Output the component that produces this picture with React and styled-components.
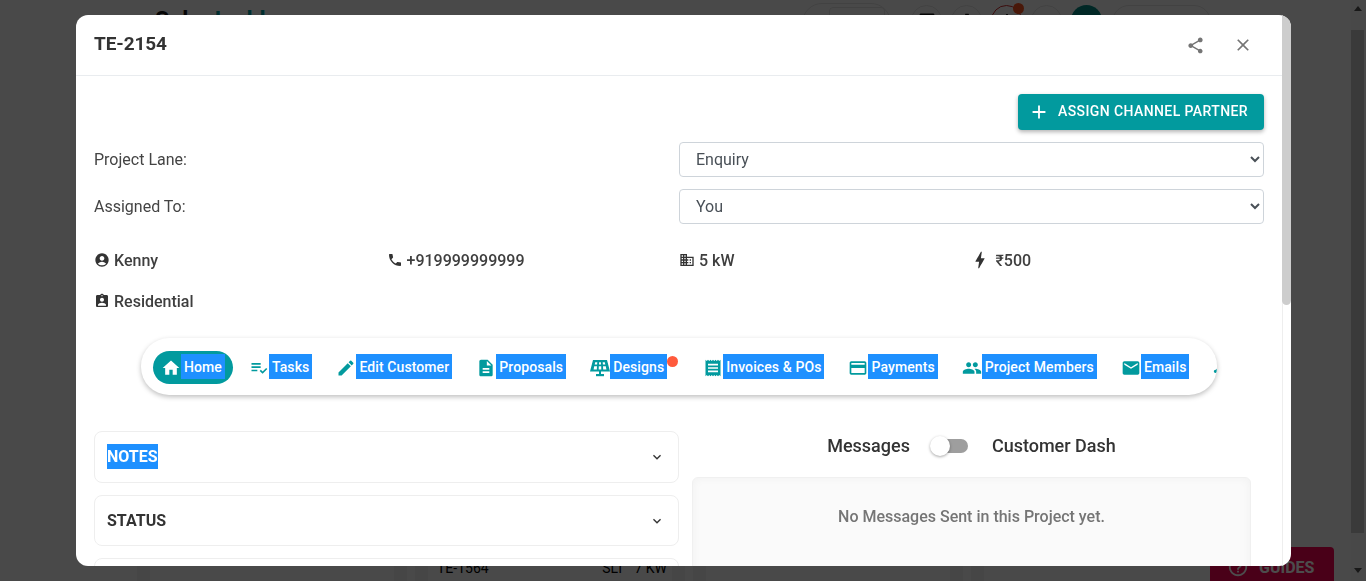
import styled, { createGlobalStyle } from "styled-components";
import {
  MdHome, MdPlaylistAddCheck, MdEdit, MdDescription, MdReceipt, MdPayment, MdPeople, MdEmail, MdTimeline,
  MdShare, MdClose, MdAdd, MdAccountCircle, MdPhone, MdBusiness, MdBolt, MdAssignmentInd,
  MdExpandMore, MdHelpOutline, MdNotifications, MdSettings, MdChat, MdPerson,
} from "react-icons/md";

const TEAL = "#029a9e";

const GlobalStyle = createGlobalStyle`
  html, body { margin: 0; height: 100%; overflow: hidden; }
  body { font-family: Roboto, "Noto Sans", sans-serif; color: #333; background: #f5f5f5; }
  * { box-sizing: border-box; }
`;

const SolarIcon = () => (
  <svg width="20" height="20" viewBox="0 0 20 20" fill={TEAL}>
    <path d="M3 2h14l3 11.5H0L3 2zM5.2 4.2l-.5 2.2h2.4l.2-2.2H5.2zm3.9 0l-.1 2.2h2l-.1-2.2H9.1zm3.6 0l.2 2.2h2.4l-.5-2.2h-2.1zM4.2 8.2l-.6 3.3h3.2l.2-3.3H4.2zm4.6 0l-.1 3.3h2.6l-.1-3.3H8.8zm4.2 0l.2 3.3h3.2l-.6-3.3H13z" fillRule="evenodd" />
    <rect x="9" y="13" width="2" height="3" />
    <rect x="6" y="16" width="8" height="2.2" />
  </svg>
);

const BoltIcon = styled(MdBolt)`
  margin: 0 -3px;
`;

const TABS = [
  { key: "home", label: "Home", icon: <MdHome size={20} />, active: true },
  { key: "tasks", label: "Tasks", icon: <MdPlaylistAddCheck size={20} /> },
  { key: "edit", label: "Edit Customer", icon: <MdEdit size={20} /> },
  { key: "proposals", label: "Proposals", icon: <MdDescription size={20} /> },
  { key: "designs", label: "Designs", icon: <SolarIcon />, badge: true },
  { key: "invoices", label: "Invoices & POs", icon: <MdReceipt size={20} /> },
  { key: "payments", label: "Payments", icon: <MdPayment size={20} /> },
  { key: "members", label: "Project Members", icon: <MdPeople size={20} /> },
  { key: "emails", label: "Emails", icon: <MdEmail size={20} /> },
  { key: "timeline", icon: <MdTimeline size={20} /> },
];

const INFO = [
  { icon: <MdAccountCircle size={16} />, text: "Kenny" },
  { icon: <MdPhone size={16} />, text: "+919999999999" },
  { icon: <MdBusiness size={16} />, text: "5 kW" },
  { icon: <BoltIcon size={22} />, text: "₹500", wide: true },
  { icon: <MdAssignmentInd size={16} />, text: "Residential" },
];

export default function App() {
  return (
    <>
      <GlobalStyle />
      <Page>
        <PageMain>
          <TopBar>
            <Logo>Solar <span>Ladder</span></Logo>
            <Actions>
              <SearchPill><SearchDot /><SearchInput /></SearchPill>
              <RoundButton><MdChat size={18} /></RoundButton>
              <RoundButton><MdSettings size={18} /></RoundButton>
              <RoundButton $alert><MdNotifications size={18} /></RoundButton>
              <RoundButton><MdPerson size={18} /></RoundButton>
              <Avatar />
              <PlanPill />
            </Actions>
          </TopBar>
          <Board>
            <BoardColumn><BoardCard /></BoardColumn>
            <BoardColumn>
              <BoardCard>
                <span>TE-1564</span>
                <CardMeta><span>SLT</span><span>7 KW</span></CardMeta>
              </BoardCard>
            </BoardColumn>
            <BoardColumn><BoardCard /></BoardColumn>
            <BoardColumn><BoardCard /></BoardColumn>
          </Board>
          <GuidesButton><MdHelpOutline size={22} />GUIDES</GuidesButton>
        </PageMain>
        <PageScrollbar>
          <ArrowUp />
          <PageThumb />
          <ArrowDown />
        </PageScrollbar>
      </Page>

      <Backdrop>
        <Modal>
          <ModalContent>
            <ModalHeader>
              <ModalTitle>TE-2154</ModalTitle>
              <HeaderIcons>
                <MdShare size={19} />
                <MdClose size={20} />
              </HeaderIcons>
            </ModalHeader>
            <ModalBody>
              <ButtonRow>
                <AssignButton><MdAdd size={22} />ASSIGN CHANNEL PARTNER</AssignButton>
              </ButtonRow>
              <FormGrid>
                <FieldLabel>Project Lane:</FieldLabel>
                <Select defaultValue="Enquiry">
                  <option>Enquiry</option>
                  <option>Survey</option>
                </Select>
                <FieldLabel>Assigned To:</FieldLabel>
                <Select defaultValue="You">
                  <option>You</option>
                </Select>
              </FormGrid>
              <InfoGrid>
                {INFO.map(({ icon, text, wide }) => (
                  <InfoItem key={text} $wide={wide}>{icon}{text}</InfoItem>
                ))}
              </InfoGrid>
              <TabBar>
                {TABS.map(({ key, label, icon, active, badge }) => (
                  <Tab key={key} $active={active} $badge={badge}>
                    {icon}
                    {label && <Selected>{label}</Selected>}
                    {badge && <Badge />}
                  </Tab>
                ))}
              </TabBar>
              <Columns>
                <AccordionList>
                  <AccordionCard $tall>
                    <AccordionTitle $selected>NOTES</AccordionTitle>
                    <MdExpandMore size={16} />
                  </AccordionCard>
                  <AccordionCard>
                    <AccordionTitle>STATUS</AccordionTitle>
                    <MdExpandMore size={16} />
                  </AccordionCard>
                  <AccordionCard />
                </AccordionList>
                <MessagesColumn>
                  <ToggleRow>
                    <ToggleLabel>Messages</ToggleLabel>
                    <Toggle><ToggleThumb /></Toggle>
                    <ToggleLabel>Customer Dash</ToggleLabel>
                  </ToggleRow>
                  <MessagesPanel>No Messages Sent in this Project yet.</MessagesPanel>
                </MessagesColumn>
              </Columns>
            </ModalBody>
          </ModalContent>
          <ModalRail><RailThumb /></ModalRail>
        </Modal>
      </Backdrop>
    </>
  );
}

const Page = styled.div`
  display: flex;
  height: 581px;
  overflow: hidden;
  background: #f6f6f6;
`;

const PageMain = styled.div`
  position: relative;
  flex: 1;
  min-width: 0;
  display: flex;
  flex-direction: column;
  justify-content: space-between;
`;

const TopBar = styled.header`
  display: flex;
  align-items: flex-start;
  padding: 3px 140px 0 155px;
`;

const Logo = styled.div`
  margin-top: 4px;
  font-size: 23px;
  font-weight: 700;
  color: #111;
  span { color: ${TEAL}; }
`;

const Actions = styled.div`
  margin-left: auto;
  display: flex;
  align-items: flex-start;
  gap: 9px;
`;

const SearchPill = styled.div`
  display: flex;
  align-items: center;
  gap: 12px;
  width: 89px;
  height: 40px;
  margin-right: 11px;
  padding-left: 6px;
  border: 1px solid #ddd;
  border-radius: 20px;
`;

const SearchDot = styled.span`
  width: 8px;
  height: 8px;
  margin-top: -8px;
  border-radius: 50%;
  background: ${TEAL};
`;

const SearchInput = styled.div`
  width: 56px;
  height: 30px;
  margin-top: -2px;
  border: 1px solid #ddd;
  border-radius: 4px;
`;

const RoundButton = styled.div`
  position: relative;
  display: flex;
  justify-content: center;
  width: 31px;
  height: 31px;
  margin-top: 2px;
  padding-top: 6px;
  border: 1px solid ${({ $alert }) => ($alert ? "#c62828" : "#ddd")};
  border-radius: 50%;
  color: #111;
  ${({ $alert }) => $alert && `
    &::after {
      content: "";
      position: absolute;
      top: -3px;
      right: -3px;
      width: 11px;
      height: 11px;
      border-radius: 50%;
      background: #f4511e;
    }
  `}
`;

const Avatar = styled.div`
  width: 31px;
  height: 31px;
  margin-top: 2px;
  border-radius: 50%;
  background: #04877f;
`;

const PlanPill = styled.div`
  width: 99px;
  height: 34px;
  margin: 2px 0 0 1px;
  border: 1px solid #ddd;
  border-radius: 17px;
`;

const Board = styled.div`
  display: flex;
  gap: 8px;
  height: 21px;
  padding-left: 137px;
`;

const BoardColumn = styled.div`
  width: 270px;
  padding: 0 13px;
  background: #ebebeb;
`;

const BoardCard = styled.div`
  display: flex;
  justify-content: space-between;
  height: 100%;
  padding: 0 5px 0 9px;
  background: #f4f4f4;
  font-size: 14px;
  line-height: 17px;
  color: #000;
`;

const CardMeta = styled.div`
  display: flex;
  gap: 10px;
`;

const GuidesButton = styled.div`
  position: absolute;
  right: 17px;
  bottom: -6px;
  display: flex;
  align-items: center;
  gap: 10px;
  width: 124px;
  height: 40px;
  padding-left: 17px;
  border-radius: 4px 4px 0 0;
  background: #f60050;
  color: #fff;
  font-size: 16px;
  font-weight: 700;
`;

const PageScrollbar = styled.div`
  display: flex;
  flex-direction: column;
  align-items: flex-start;
  width: 15px;
  background: #f1f1f1;
`;

const ArrowUp = styled.div`
  width: 0;
  height: 0;
  margin: 6px 0 0 3px;
  border: 4px solid transparent;
  border-top: 0;
  border-bottom: 5px solid #505050;
`;

const PageThumb = styled.div`
  width: 13px;
  height: 503px;
  margin-top: 19px;
  background: #c1c1c1;
`;

const ArrowDown = styled.div`
  width: 0;
  height: 0;
  margin: 35px 0 0 3px;
  border: 4px solid transparent;
  border-bottom: 0;
  border-top: 5px solid #505050;
`;

const Backdrop = styled.div`
  position: fixed;
  inset: 0;
  display: flex;
  padding: 15px 75px 15px 76px;
  background: rgba(0, 0, 0, 0.7);
`;

const Modal = styled.div`
  flex: 1;
  min-height: 0;
  display: flex;
  overflow: hidden;
  border-radius: 12px;
  background: #fff;
`;

const ModalContent = styled.div`
  flex: 1;
  min-width: 0;
  overflow: hidden;
`;

const ModalRail = styled.div`
  flex-shrink: 0;
  width: 9px;
  border-left: 1px solid #eee;
`;

const RailThumb = styled.div`
  width: 9px;
  height: 290px;
  margin-left: -1px;
  border-radius: 0 0 8px 8px;
  background: #cdcdcd;
`;

const ModalHeader = styled.div`
  display: flex;
  align-items: center;
  justify-content: space-between;
  height: 61px;
  padding: 0 18px;
  border-bottom: 1px solid #e9ecef;
`;

const ModalTitle = styled.h5`
  margin: 0 0 4px;
  font-size: 19px;
  font-weight: 700;
  letter-spacing: -0.1px;
  color: #333;
`;

const HeaderIcons = styled.div`
  display: flex;
  align-items: center;
  gap: 28px;
  margin-right: 11px;
  color: #757575;
`;

const ModalBody = styled.div`
  padding: 18px;
`;

const ButtonRow = styled.div`
  display: flex;
  justify-content: flex-end;
`;

const AssignButton = styled.button`
  display: flex;
  align-items: center;
  gap: 8px;
  height: 36px;
  padding: 0 16px 2px 10px;
  border: 0;
  border-radius: 4px;
  background: ${TEAL};
  color: #fff;
  font-family: inherit;
  font-size: 14px;
  font-weight: 500;
  letter-spacing: 0.4px;
  box-shadow: 0 2px 4px rgba(0, 0, 0, 0.3);
  svg { margin-top: 2px; }
`;

const FormGrid = styled.div`
  display: grid;
  grid-template-columns: 1fr 1fr;
  gap: 12px 0;
  align-items: center;
  margin-top: 12px;
`;

const FieldLabel = styled.label`
  font-size: 16px;
  color: #444;
`;

const Select = styled.select`
  width: 100%;
  height: 35px;
  padding: 0 12px;
  border: 1px solid #ced4da;
  border-radius: 4px;
  background: #fff;
  color: #495057;
  font-family: inherit;
  font-size: 16px;
`;

const InfoGrid = styled.div`
  display: grid;
  grid-template-columns: repeat(4, 1fr);
  gap: 17px 0;
  margin-top: 24px;
`;

const InfoItem = styled.div`
  display: flex;
  align-items: center;
  gap: ${({ $wide }) => ($wide ? "8px" : "4px")};
  height: 24px;
  font-size: 16px;
  font-weight: 500;
  color: #3f3f3f;
  svg { flex-shrink: 0; color: #333; }
`;

const TabBar = styled.nav`
  display: flex;
  align-items: center;
  gap: 8px;
  width: 1076px;
  height: 57px;
  margin: 25px 0 0 47px;
  padding: 0 12px;
  overflow: hidden;
  border-radius: 28px;
  box-shadow: 0 2px 5px rgba(0, 0, 0, 0.25);
`;

const Tab = styled.div`
  position: relative;
  flex-shrink: 0;
  display: flex;
  align-items: center;
  height: 33px;
  margin-top: 1px;
  padding: 0 ${({ $badge }) => ($badge ? "20px" : "8px")} 0 8px;
  border-radius: 17px;
  background: ${({ $active }) => ($active ? TEAL : "transparent")};
  color: ${({ $active }) => ($active ? "#fff" : TEAL)};
  svg { flex-shrink: 0; margin-top: 2px; }
`;

const Selected = styled.span`
  margin-top: -1px;
  padding: 1px 3px 0;
  background: #1e90ff;
  color: #fff;
  font-size: 14px;
  font-weight: 500;
  letter-spacing: 0.1px;
  line-height: 24px;
  white-space: nowrap;
`;

const Badge = styled.span`
  position: absolute;
  top: 5px;
  right: 9px;
  width: 11px;
  height: 11px;
  border-radius: 50%;
  background: #ff5a3c;
`;

const Columns = styled.div`
  display: grid;
  grid-template-columns: 585px 1fr;
  gap: 13px;
  margin-top: 36px;
`;

const AccordionList = styled.div`
  display: flex;
  flex-direction: column;
  gap: 12px;
`;

const AccordionCard = styled.div`
  display: flex;
  flex-shrink: 0;
  align-items: center;
  justify-content: space-between;
  height: ${({ $tall }) => ($tall ? "52px" : "51px")};
  padding: 0 13px 0 12px;
  border: 1px solid #eee;
  border-radius: 8px;
  color: #333;
`;

const AccordionTitle = styled.span`
  font-size: 16px;
  font-weight: 700;
  line-height: 25px;
  ${({ $selected }) => $selected && "margin-top: -1px; background: #1e90ff; color: #fff;"}
`;

const MessagesColumn = styled.div`
  display: flex;
  flex-direction: column;
  padding-right: 13px;
`;

const ToggleRow = styled.div`
  display: flex;
  align-items: center;
  justify-content: center;
  gap: 22px;
  height: 29px;
`;

const ToggleLabel = styled.span`
  font-size: 18px;
  font-weight: 500;
  color: #333;
`;

const Toggle = styled.div`
  position: relative;
  width: 36px;
  height: 14px;
  margin-right: 2px;
  border-radius: 7px;
  background: #9e9e9e;
`;

const ToggleThumb = styled.span`
  position: absolute;
  top: -3px;
  left: -2px;
  width: 20px;
  height: 20px;
  border-radius: 50%;
  background: #fff;
  box-shadow: 0 1px 3px rgba(0, 0, 0, 0.35);
`;

const MessagesPanel = styled.div`
  min-height: 200px;
  margin-top: 17px;
  padding-top: 29px;
  border: 1px solid #f0f0f0;
  border-radius: 6px;
  background: #fafafa;
  box-shadow: inset 0 0 10px rgba(0, 0, 0, 0.04);
  color: #757575;
  font-size: 16px;
  font-weight: 500;
  text-align: center;
`;
